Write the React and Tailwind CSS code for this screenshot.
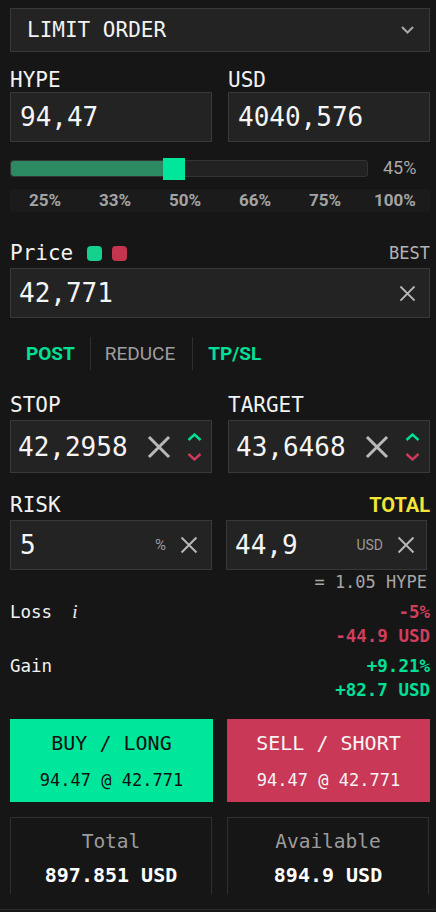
import React, { useState } from "react";

const mono = "font-['DejaVu_Sans_Mono',monospace]";
const sans = "font-['Roboto','Liberation_Sans',sans-serif]";

const XIcon = ({ size = 18, stroke = 2.5 }) => (
  <svg width={size} height={size} viewBox="0 0 24 24" className="shrink-0">
    <path d="M3 3L21 21M21 3L3 21" stroke="#b8b8b8" strokeWidth={stroke} strokeLinecap="square" fill="none" />
  </svg>
);

const Stepper = () => (
  <div className="flex flex-col items-center gap-[12px] shrink-0">
    <svg width="15" height="8" viewBox="0 0 15 8">
      <path d="M1.5 7L7.5 1.5L13.5 7" stroke="#00e096" strokeWidth="2.4" fill="none" />
    </svg>
    <svg width="15" height="8" viewBox="0 0 15 8">
      <path d="M1.5 1L7.5 6.5L13.5 1" stroke="#d03a5a" strokeWidth="2.4" fill="none" />
    </svg>
  </div>
);

const Label = ({ children, className = "" }) => (
  <div className={`${mono} text-[21px] leading-[24px] text-[#f2f2f2] ${className}`}>{children}</div>
);

const Box = ({ children, className = "" }) => (
  <div className={`flex items-center bg-[#232323] border border-[#383838] ${className}`}>{children}</div>
);

const Value = ({ children }) => (
  <span className={`${mono} text-[26px] leading-none text-[#f5f5f5] flex-1`}>{children}</span>
);

export default function App() {
  const [pct] = useState(45);
  const steps = ["25%", "33%", "50%", "66%", "75%", "100%"];

  return (
    <div className="w-[436px] h-[912px] bg-[#161616] pl-[10px] pr-[6px] pt-[8px] overflow-hidden relative leading-none">
      {/* order type */}
      <Box className="h-[44px] pl-[16px] pr-[15px] justify-between">
        <span className={`${mono} text-[21px] text-[#f2f2f2]`}>LIMIT ORDER</span>
        <svg width="13" height="8" viewBox="0 0 13 8">
          <path d="M1 1L6.5 6.5L12 1" stroke="#a8a8a8" strokeWidth="2" fill="none" />
        </svg>
      </Box>

      {/* size */}
      <div className="grid grid-cols-2 gap-4 mt-[16px]">
        <div>
          <Label>HYPE</Label>
          <Box className="h-[50px] pl-[9px]">
            <Value>94,47</Value>
          </Box>
        </div>
        <div>
          <Label>USD</Label>
          <Box className="h-[50px] pl-[9px]">
            <Value>4040,576</Value>
          </Box>
        </div>
      </div>

      {/* slider */}
      <div className="flex items-center mt-[15px] h-[22px]">
        <div className="relative w-[358px] h-[17px] rounded-[3px] bg-[#222] border border-[#343434]">
          <div className="absolute left-0 top-0 bottom-0 w-[158px] bg-[#2b8a61] rounded-l-[3px]" />
          <div className="absolute left-[152px] top-[-3px] w-[22px] h-[22px] bg-[#00e79b]" />
        </div>
        <span className={`${sans} text-[18px] text-[#a8a8a8] ml-[15px]`}>{pct}%</span>
      </div>

      <div className={`${sans} grid grid-cols-6 items-center h-[23px] mt-[10px] bg-[#1b1b1b] rounded-[3px] text-[17px] font-bold text-[#a3a3a3]`}>
        {steps.map((s) => (
          <span key={s} className="text-center">{s}</span>
        ))}
      </div>

      {/* price */}
      <div className="flex items-center justify-between mt-[29px] h-[24px]">
        <div className="flex items-center">
          <Label>Price</Label>
          <span className="ml-[14px] w-[15px] h-[15px] rounded-[4px] bg-[#14d18d]" />
          <span className="ml-[10px] w-[15px] h-[15px] rounded-[4px] bg-[#c4364f]" />
        </div>
        <span className={`${mono} text-[17px] text-[#b3b3b3]`}>BEST</span>
      </div>
      <Box className="h-[50px] mt-[3px] pl-[8px] pr-[13px]">
        <Value>42,771</Value>
        <XIcon size={17} stroke={2.6} />
      </Box>

      {/* options */}
      <div className={`${sans} flex items-center h-[33px] mt-[19px] text-[19px]`}>
        <span className="pl-[16px] pr-[15px] font-bold text-[#00e096]">POST</span>
        <span className="w-px h-full bg-[#2e2e2e]" />
        <span className="pl-[14px] pr-[17px] text-[#9e9e9e]">REDUCE</span>
        <span className="w-px h-full bg-[#2e2e2e]" />
        <span className="pl-[15px] font-bold text-[#00e096]">TP/SL</span>
      </div>

      {/* stop / target */}
      <div className="grid grid-cols-2 gap-4 mt-[23px]">
        <div>
          <Label>STOP</Label>
          <Box className="h-[53px] mt-[3px] pl-[7px] pr-[9px]">
            <Value>42,2958</Value>
            <XIcon size={24} stroke={3} />
            <span className="ml-[16px]"><Stepper /></span>
          </Box>
        </div>
        <div>
          <Label>TARGET</Label>
          <Box className="h-[53px] mt-[3px] pl-[7px] pr-[9px]">
            <Value>43,6468</Value>
            <XIcon size={24} stroke={3} />
            <span className="ml-[16px]"><Stepper /></span>
          </Box>
        </div>
      </div>

      {/* risk / total */}
      <div className="flex justify-between items-center h-[24px] mt-[20px]">
        <Label>RISK</Label>
        <span className={`${sans} text-[20px] leading-[24px] font-bold text-[#f5e53b]`}>TOTAL</span>
      </div>
      <div className="grid grid-cols-[202px_201px] gap-[14px] mt-[3px]">
        <Box className="h-[50px] pl-[9px] pr-[13px]">
          <Value>5</Value>
          <span className={`${sans} text-[15px] text-[#9a9a9a] mr-[14px]`}>%</span>
          <XIcon size={18} stroke={2.6} />
        </Box>
        <Box className="h-[50px] pl-[8px] pr-[11px]">
          <Value>44,9</Value>
          <span className={`${sans} text-[14px] text-[#9a9a9a] mr-[14px]`}>USD</span>
          <XIcon size={18} stroke={2.6} />
        </Box>
      </div>
      <div className={`${mono} text-right text-[17px] leading-[20px] text-[#a6a6a6] mt-[2px] mr-[3px]`}>= 1.05 HYPE</div>

      {/* loss / gain */}
      <div className={`${mono} text-[17.5px] leading-[24px] mt-[8px]`}>
        <div className="flex justify-between">
          <span className="text-[#f2f2f2] flex items-center">
            Loss
            <span className="ml-[20px] font-['Liberation_Serif',serif] italic text-[19px]">i</span>
          </span>
          <span className="font-bold text-[#cf3e5c]">-5%</span>
        </div>
        <div className="text-right font-bold text-[#cf3e5c]">-44.9 USD</div>
        <div className="flex justify-between mt-[6px]">
          <span className="text-[#f2f2f2]">Gain</span>
          <span className="font-bold text-[#00e096]">+9.21%</span>
        </div>
        <div className="text-right font-bold text-[#00e096]">+82.7 USD</div>
      </div>

      {/* buttons */}
      <div className={`${mono} grid grid-cols-2 gap-[14px] mt-[17px]`}>
        <button className="h-[83px] bg-[#00e79b] text-[#111] flex flex-col items-center justify-center">
          <span className="text-[20px] leading-[24px]">BUY / LONG</span>
          <span className="text-[17px] leading-[20px] mt-[15px]">94.47 @ 42.771</span>
        </button>
        <button className="h-[83px] bg-[#c93856] text-[#f5f5f5] flex flex-col items-center justify-center">
          <span className="text-[20px] leading-[24px]">SELL / SHORT</span>
          <span className="text-[17px] leading-[20px] mt-[15px]">94.47 @ 42.771</span>
        </button>
      </div>

      {/* balances */}
      <div className={`${mono} grid grid-cols-[202px_202px] gap-[15px] mt-[15px]`}>
        <div className="h-[77px] border border-b-0 border-[#2f2f2f] flex flex-col items-center pt-[12px]">
          <span className="text-[19.5px] leading-[24px] text-[#9c9c9c]">Total</span>
          <span className="text-[20px] leading-[24px] font-bold text-white mt-[9px]">897.851 USD</span>
        </div>
        <div className="h-[77px] border border-b-0 border-[#2f2f2f] flex flex-col items-center pt-[12px]">
          <span className="text-[19.5px] leading-[24px] text-[#9c9c9c]">Available</span>
          <span className="text-[20px] leading-[24px] font-bold text-white mt-[9px]">894.9 USD</span>
        </div>
      </div>
      <div className="absolute left-0 right-0 top-[909px] h-px bg-[#2a2a2a]" />
    </div>
  );
}
